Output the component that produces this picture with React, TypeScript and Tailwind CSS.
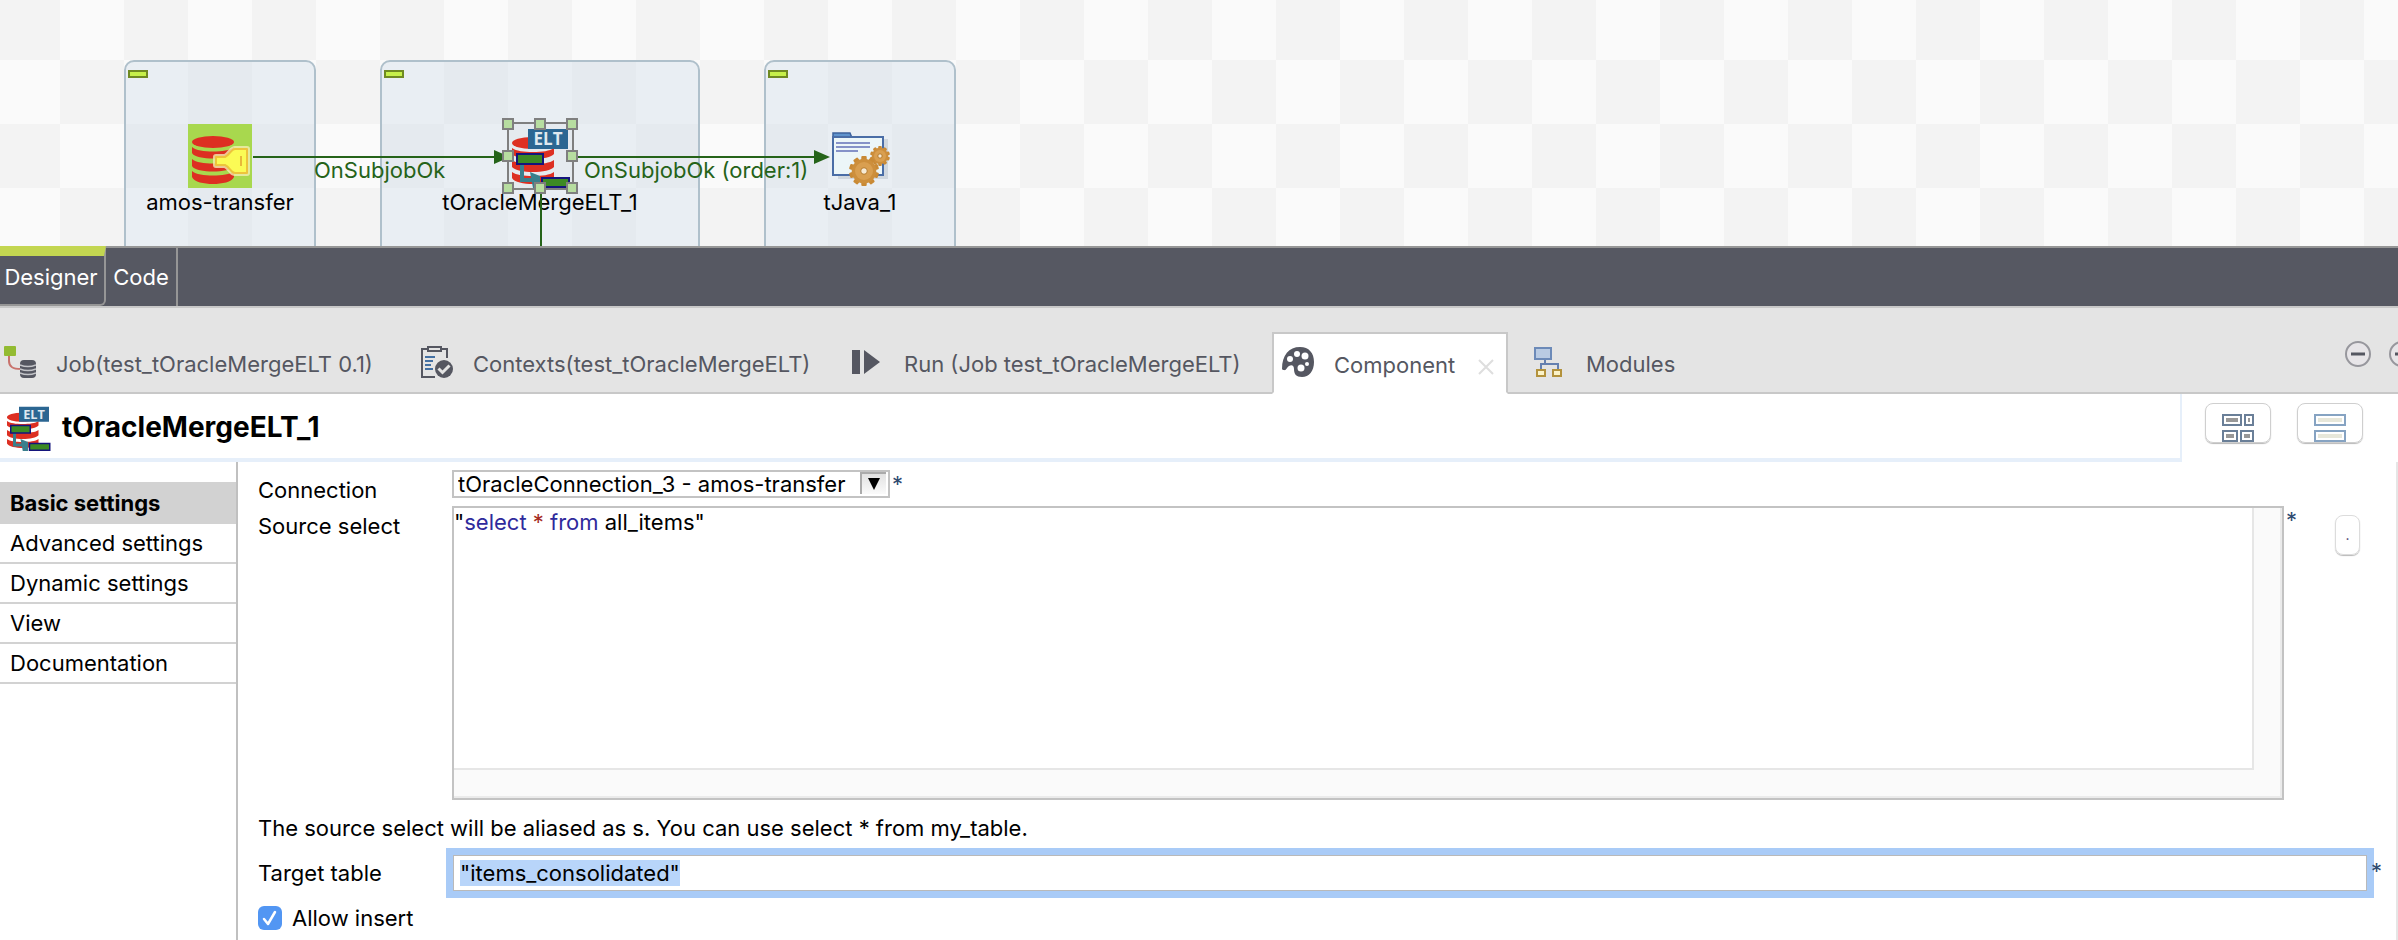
import { useEffect, useRef, useState } from "react";
import type { ReactNode } from "react";

function Gear({ cx, cy, r }: { cx: number; cy: number; r: number }) {
  const teeth = Array.from({ length: 10 }, (_, i) => i * 36);
  return (
    <g>
      {teeth.map((a) => (
        <rect
          key={a}
          x={cx - r * 0.18}
          y={cy - r}
          width={r * 0.36}
          height={r}
          rx={1}
          fill="#c98a35"
          transform={`rotate(${a} ${cx} ${cy})`}
        />
      ))}
      <circle cx={cx} cy={cy} r={r * 0.82} fill="#cd8f3c" />
      <circle cx={cx} cy={cy} r={r * 0.6} fill="#d99f50" />
      <circle cx={cx} cy={cy} r={r * 0.22} fill="#f6ead4" stroke="#b67a2a" strokeWidth="1" />
    </g>
  );
}

function ConnectionIcon() {
  return (
    <svg viewBox="0 0 64 64" className="size-16 bg-[#a8d84e]" aria-hidden="true">
      <g fill="#dd2f22">
        <ellipse cx="25" cy="18" rx="21" ry="6" />
        <path d="M4 23c4 3.500 12 4.500 21 4.500s17-1 21-4.500v6c-2 4-12 5.500-21 5.500S6 33 4 29z" />
        <path d="M4 35c4 3.500 12 4.500 21 4.500s17-1 21-4.500v7c-2 4-12 5.500-21 5.500S6 46 4 42z" />
        <path d="M4 47c4 3.500 12 4.500 21 4.500s17-1 21-4.500v6c-2 5-12 7-21 7S6 58 4 53z" />
      </g>
      <path d="M28 33h9c5-2 6-8 10-8h12v24H47c-4 0-5-6-10-8h-9z" fill="none" stroke="#f3eeb0" strokeWidth="6" strokeLinejoin="round" opacity=".8" />
      <path d="M28 33h9c5-2 6-8 10-8h12v24H47c-4 0-5-6-10-8h-9z" fill="#fbfb55" stroke="#edc43c" strokeWidth="2" strokeLinejoin="round" />
      <path d="M53 32v10" stroke="#e8b93a" strokeWidth="2" />
    </svg>
  );
}

function MergeIcon({ className }: { className: string }) {
  return (
    <svg viewBox="0 0 64 64" className={className} aria-hidden="true">
      <g fill="#dd2f22">
        <ellipse cx="24" cy="19" rx="20" ry="6" />
        <path d="M4 24c4 3 12 4 21 4s17-1 21-4v6c-2 3-12 5-21 5S6 33 4 30z" />
        <path d="M4 36c4 3 12 4 21 4s17-1 21-4v7c-2 3-12 5-21 5S6 46 4 43z" />
        <path d="M4 48c4 3 12 4 21 4s17-1 21-4v6c-2 4-12 6-21 6S6 58 4 54z" />
      </g>
      <rect x="20" y="5" width="40" height="20" fill="#2b6692" />
      <text x="40" y="21" textAnchor="middle" fontFamily="Open Sans, sans-serif" fontWeight="700" fontSize="17" fill="#dfe8ef">
        ELT
      </text>
      <path d="M14 40v16h10" fill="none" stroke="#3a7f8c" strokeWidth="4" />
      <path d="M22 48l10 4v12h-7z" fill="#3a7f8c" />
      <rect x="9" y="30" width="26" height="10" fill="#3c8a24" stroke="#14147c" strokeWidth="2" />
      <rect x="34" y="54" width="27" height="9" fill="#3c8a24" stroke="#14147c" strokeWidth="2" />
    </svg>
  );
}

function JavaIcon() {
  return (
    <svg viewBox="0 0 64 64" className="size-16" aria-hidden="true">
      <path d="M10 15h50v40H10z" fill="#aab3bd" opacity=".4" />
      <path d="M5 14V9h17l2 5z" fill="#5f93cc" stroke="#3c619c" strokeWidth="1.500" />
      <rect x="5" y="13" width="50" height="38" fill="#ecf6f8" stroke="#4a6da6" strokeWidth="2" />
      <path d="M8 19h34M8 23h34M8 27h22" stroke="#8592c8" strokeWidth="2" />
      <Gear cx={52} cy={32} r={10} />
      <Gear cx={36} cy={47} r={15} />
    </svg>
  );
}

function JobIcon() {
  return (
    <svg viewBox="0 0 32 32" className="size-8" aria-hidden="true">
      <path d="M5 9v6c0 6 4 8 12 8" fill="none" stroke="#c9736d" strokeWidth="2" />
      <rect width="12" height="10" rx="1" fill="#93bb32" />
      <rect x="16" y="14" width="16" height="18" rx="4" fill="#555761" />
      <path d="M16 19c5 2 11 2 16 0M16 23c5 2 11 2 16 0M16 27c5 2 11 2 16 0" fill="none" stroke="#c3c4c8" strokeWidth="1.500" />
    </svg>
  );
}

function ContextsIcon() {
  return (
    <svg viewBox="0 0 32 32" className="size-8" aria-hidden="true">
      <path d="M14 31H1V3h6M20 3h6v9" fill="none" stroke="#555761" strokeWidth="2" />
      <rect x="7" y="1" width="13" height="4" fill="none" stroke="#555761" strokeWidth="2" />
      <path d="M4 11h10M4 15h8M4 19h6M4 23h8" stroke="#4370a3" strokeWidth="2" />
      <circle cx="23" cy="23" r="9" fill="#555761" />
      <path d="M17.500 22.500l4 4 7-7" fill="none" stroke="#e4e4e4" strokeWidth="3" />
    </svg>
  );
}

function RunIcon() {
  return (
    <svg viewBox="0 0 32 32" className="size-8" aria-hidden="true">
      <path d="M0 4h8v24H0zM12 4l16 12-16 12z" fill="#555761" />
    </svg>
  );
}

function PaletteIcon() {
  return (
    <svg viewBox="0 0 32 32" className="size-8" aria-hidden="true">
      <path d="M0 22C0 8 7 0 18 0c9 0 14 6 14 15 0 9-5 15-12 15-6 0-8-3-8-8 0-3-2-5-5-3-2 1-3 5-5 4C1 23 0 22.500 0 22z" fill="#555761" />
      <g fill="#fff">
        <circle cx="8" cy="12" r="3" />
        <circle cx="15" cy="7" r="3" />
        <circle cx="23" cy="9" r="3.500" />
        <circle cx="25" cy="17" r="2" />
        <circle cx="19" cy="21" r="3.500" />
      </g>
    </svg>
  );
}

function ModulesIcon() {
  return (
    <svg viewBox="0 0 32 32" className="size-8" aria-hidden="true">
      <path d="M11 13v6M7 23v-5h17v5" fill="none" stroke="#6580b0" strokeWidth="2" />
      <rect x="1" y="2" width="16" height="11" fill="#b9cbe3" stroke="#6c8ab8" strokeWidth="2" />
      <rect x="3" y="24" width="8" height="6" fill="#fbf3c8" stroke="#b3923c" strokeWidth="2" />
      <rect x="19" y="24" width="8" height="6" fill="#fbf3c8" stroke="#b3923c" strokeWidth="2" />
    </svg>
  );
}

function MinimizeIcon() {
  return (
    <svg viewBox="0 0 28 28" className="size-7" aria-hidden="true">
      <circle cx="14" cy="14" r="12" fill="#e7e5e8" stroke="#97979d" strokeWidth="2" />
      <path d="M7 14h14" stroke="#555761" strokeWidth="3" />
    </svg>
  );
}

function GridLayoutIcon() {
  return (
    <svg viewBox="0 0 32 28" className="h-7 w-8" aria-hidden="true">
      <g fill="#fff" stroke="#6a7f98" strokeWidth="2">
        <rect x="1" y="1" width="18" height="10" />
        <rect x="23" y="1" width="8" height="10" />
        <rect x="1" y="17" width="14" height="10" />
        <rect x="19" y="17" width="12" height="10" />
      </g>
      <path d="M4 4h12v4H4zM26 4h2v4h-2zM4 20h8v4H4zM22 20h6v4h-6z" fill="#989898" />
    </svg>
  );
}

function RowLayoutIcon() {
  return (
    <svg viewBox="0 0 32 28" className="h-7 w-8" aria-hidden="true">
      <g fill="#fff" stroke="#86a3c2" strokeWidth="2">
        <rect x="1" y="1" width="30" height="10" />
        <rect x="1" y="17" width="30" height="10" />
      </g>
      <path d="M4 4h24v4H4zM4 20h24v4H4z" fill="#e7e7da" />
    </svg>
  );
}

function Subjob({ className, children }: { className: string; children: ReactNode }) {
  return (
    <div className={`absolute top-[60px] h-[200px] rounded-[10px] border-2 border-[#afc0cb] bg-[rgba(216,226,236,0.5)] ${className}`}>
      <span className="absolute top-2 left-0.5 h-2 w-5 border-2 border-[#6f8a22] bg-[#c6f04a]" />
      <div className="flex flex-col items-center pt-[62px]">{children}</div>
    </div>
  );
}

function NodeLabel({ children }: { children: ReactNode }) {
  return <span className="leading-7 whitespace-nowrap">{children}</span>;
}

const handles = [
  "left-[502px] top-[118px]",
  "left-[534px] top-[118px]",
  "left-[566px] top-[118px]",
  "left-[502px] top-[150px]",
  "left-[566px] top-[150px]",
  "left-[502px] top-[182px]",
  "left-[534px] top-[182px]",
  "left-[566px] top-[182px]",
];

function Canvas() {
  return (
    <section
      aria-label="Job design"
      className="relative h-[246px] overflow-hidden bg-[repeating-conic-gradient(#fafafa_0_25%,#f3f3f3_0_50%)] bg-[length:128px_128px] bg-[position:-4px_-4px]"
    >
      <Subjob className="left-[124px] w-[192px]">
        <ConnectionIcon />
        <NodeLabel>amos-transfer</NodeLabel>
      </Subjob>
      <Subjob className="left-[380px] w-[320px]">
        <MergeIcon className="size-16" />
        <NodeLabel>tOracleMergeELT_1</NodeLabel>
      </Subjob>
      <Subjob className="left-[764px] w-[192px]">
        <JavaIcon />
        <NodeLabel>tJava_1</NodeLabel>
      </Subjob>
      <svg className="absolute top-0 left-0 h-[246px] w-[960px]" viewBox="0 0 960 246" aria-hidden="true">
        <g stroke="#256319" strokeWidth="2">
          <path d="M253 157h243M578 157h240M541 192v54" />
        </g>
        <path d="M494 150l16 7-16 7zM814 150l16 7-16 7z" fill="#256319" />
        <rect x="508" y="123" width="65" height="66" fill="none" stroke="#7f7f7f" strokeWidth="2" />
      </svg>
      {handles.map((place) => (
        <span key={place} className={`absolute size-3 border-2 border-[#7f7f7f] bg-[#b7dda0] ${place}`} />
      ))}
      <span className="absolute top-[156px] left-[314px] leading-7 text-[#256319]">OnSubjobOk</span>
      <span className="absolute top-[156px] left-[584px] leading-7 whitespace-nowrap text-[#256319]">OnSubjobOk (order:1)</span>
    </section>
  );
}

function EditorTabs() {
  return (
    <nav aria-label="Editor pages" className="flex h-[62px] border-b-2 border-[#c8c8c8] bg-[#565862] text-white">
      <button className="w-[106px] rounded-br-md border-t-10 border-r-2 border-b-2 border-t-[#c3d651] border-r-[#969696] border-b-[#969696] pr-0.5 pb-1.5 text-center">
        Designer
      </button>
      <button className="w-[72px] border-t-2 border-r-2 border-[#969696] text-center">Code</button>
      <div className="flex-1 border-t-2 border-[#969696]" />
    </nav>
  );
}

function ViewTab({ icon, className, children }: { icon: ReactNode; className: string; children: ReactNode }) {
  return (
    <button className={`flex h-full shrink-0 items-center gap-5 border-b-2 border-[#c8c8c8] whitespace-nowrap ${className}`}>
      {icon}
      <span className="pt-1">{children}</span>
    </button>
  );
}

function ViewTabs() {
  return (
    <nav aria-label="Views" className="flex h-[86px] items-end overflow-hidden bg-[#e4e4e4] pt-6 text-[#555761]">
      <ViewTab icon={<JobIcon />} className="w-[421px] pl-1">
        Job(test_tOracleMergeELT 0.1)
      </ViewTab>
      <ViewTab icon={<ContextsIcon />} className="w-[431px]">
        Contexts(test_tOracleMergeELT)
      </ViewTab>
      <ViewTab icon={<RunIcon />} className="w-[420px]">
        Run (Job test_tOracleMergeELT)
      </ViewTab>
      <div className="flex h-full w-[236px] shrink-0 items-center border-2 border-[#c8c8c8] border-b-white bg-white px-2">
        <button className="flex flex-1 items-center gap-5">
          <PaletteIcon />
          <span className="pt-1">Component</span>
        </button>
        <button aria-label="Close Component" className="px-1 pt-2">
          <svg viewBox="0 0 16 16" className="size-4" aria-hidden="true">
            <path d="M1 1l14 14M15 1L1 15" stroke="#dedede" strokeWidth="2" />
          </svg>
        </button>
      </div>
      <ViewTab icon={<ModulesIcon />} className="w-[200px] pl-[26px]">
        Modules
      </ViewTab>
      <div className="flex h-full min-w-0 flex-1 items-start justify-end gap-4 overflow-hidden border-b-2 border-[#c8c8c8] pt-2">
        <button aria-label="Minimize" className="shrink-0">
          <MinimizeIcon />
        </button>
        <button aria-label="Maximize" className="-mr-[18px] shrink-0">
          <MinimizeIcon />
        </button>
      </div>
    </nav>
  );
}

function TitleBar() {
  return (
    <header className="flex h-[68px] bg-white">
      <div className="flex flex-1 items-center gap-2.5 border-r-2 border-b-4 border-[#e6effa] pt-0.5 pl-1">
        <MergeIcon className="size-12" />
        <h1 className="text-[28px] font-bold">tOracleMergeELT_1</h1>
      </div>
      <div className="flex gap-[26px] pt-[9px] pr-[35px] pl-[23px]">
        <button aria-label="Table layout" className="flex h-10 w-[66px] items-end justify-center rounded-lg border border-[#cfcfcf] shadow-[0_1px_1px_#b8b8b8]">
          <GridLayoutIcon />
        </button>
        <button aria-label="Row layout" className="flex h-10 w-[66px] items-end justify-center rounded-lg border border-[#cfcfcf] shadow-[0_1px_1px_#b8b8b8]">
          <RowLayoutIcon />
        </button>
      </div>
    </header>
  );
}

const sections = ["Basic settings", "Advanced settings", "Dynamic settings", "View", "Documentation"];

function SectionList() {
  return (
    <nav aria-label="Settings" className="w-[238px] shrink-0 border-r-2 border-[#c0c0c0] pt-5">
      {sections.map((name, i) => (
        <button
          key={name}
          className={
            i === 0
              ? "block h-[42px] w-full bg-[#d2d2d2] pl-2.5 text-left font-bold"
              : "block h-10 w-full border-b-2 border-[#d2d2d2] pl-2.5 text-left"
          }
        >
          {name}
        </button>
      ))}
    </nav>
  );
}

function Required() {
  return <span className="leading-7 text-[#2f4a70]">*</span>;
}

function Highlighted({ code }: { code: string }) {
  return (
    <>
      {code.split(/(\bselect\b|\bfrom\b|\*)/).map((part, i) => {
        if (part === "*") return <span key={i} className="text-[#a52a1e]">{part}</span>;
        if (part === "select" || part === "from") return <span key={i} className="text-[#2f2a9c]">{part}</span>;
        return part;
      })}
    </>
  );
}

function SettingsForm() {
  const [source, setSource] = useState('"select * from all_items"');
  const target = useRef<HTMLInputElement>(null);

  useEffect(() => {
    target.current?.focus();
    target.current?.select();
  }, []);

  return (
    <form className="flex min-w-0 flex-1 flex-col border-r-2 border-[#e6e6e6] pt-2 pl-5">
      <div className="flex h-9">
        <label htmlFor="connection" className="w-[194px] shrink-0 pt-1.5 leading-7">
          Connection
        </label>
        <div className="relative mr-0.5 h-7 w-[438px] border-2 border-[#c3c3c3]">
          <div className="h-[22px] overflow-hidden">
            <select id="connection" className="block h-6 w-full appearance-none bg-white pl-1 leading-6 outline-none">
              <option>tOracleConnection_3 - amos-transfer</option>
            </select>
          </div>
          <span className="pointer-events-none absolute top-0 right-0.5 flex h-[22px] w-[26px] items-center justify-center border-t-2 border-l-2 border-[#ababab] bg-linear-to-b from-[#e2e2e2] to-[#fafafa]">
            <svg viewBox="0 0 12 12" className="size-3" aria-hidden="true">
              <path d="M0 0h12L6 12z" fill="#000" />
            </svg>
          </span>
        </div>
        <Required />
      </div>

      <div className="flex">
        <label htmlFor="source" className="w-[194px] shrink-0 pt-1.5 leading-7">
          Source select
        </label>
        <div className="relative h-[294px] min-w-0 flex-1 border-2 border-[#c3c3c3] bg-[#fafafa] pr-7 pb-7 shadow-[inset_-2px_-2px_#ebebeb]">
          <div className="relative h-full border-r-2 border-b-2 border-[#e6e6e6] bg-white">
            <pre aria-hidden="true" className="font-[Inter,sans-serif] leading-7">
              <Highlighted code={source} />
            </pre>
            <textarea
              id="source"
              spellCheck={false}
              value={source}
              onChange={(e) => setSource(e.target.value)}
              className="absolute inset-0 resize-none bg-transparent leading-7 text-transparent caret-black outline-none"
            />
          </div>
        </div>
        <div className="flex w-[112px] shrink-0 justify-between pr-9 pl-0.5">
          <Required />
          <button
            type="button"
            aria-label="Open query builder"
            className="mt-[9px] h-10 w-[25px] rounded-lg border border-[#dcdcdc] text-sm text-[#4a3a6a] shadow-[0_1px_1px_#b8b8b8]"
          >
            .
          </button>
        </div>
      </div>

      <p className="pt-3.5 leading-7">The source select will be aliased as s. You can use select * from my_table.</p>

      <div className="flex pt-[13px]">
        <label htmlFor="target" className="w-[195px] shrink-0 pt-1 leading-7">
          Target table
        </label>
        <input
          id="target"
          ref={target}
          defaultValue={'"items_consolidated"'}
          className="h-9 min-w-0 flex-1 border border-[#b9b9b9] bg-white px-1.5 leading-7 shadow-[0_0_0_7px_#a9cbf7] outline-none selection:bg-[#b8d5fa] selection:text-black"
        />
        <span className="relative w-[29px] pl-1">
          <Required />
        </span>
      </div>

      <label className="mt-[15px] flex h-6 items-center gap-2.5">
        <span className="relative size-6">
          <input type="checkbox" defaultChecked className="peer block size-6 appearance-none rounded-md bg-[#5296f3] not-checked:bg-[#d8d8d8]" />
          <svg viewBox="0 0 24 24" className="pointer-events-none absolute inset-0 hidden peer-checked:block" aria-hidden="true">
            <path d="M6 13l4 5 7-12" fill="none" stroke="#fff" strokeWidth="2.500" strokeLinecap="round" strokeLinejoin="round" />
          </svg>
        </span>
        Allow insert
      </label>
    </form>
  );
}

export default function App() {
  return (
    <div className="flex min-h-screen flex-col bg-white font-[Inter,sans-serif] text-[22px] text-black">
      <Canvas />
      <EditorTabs />
      <ViewTabs />
      <TitleBar />
      <main className="flex flex-1">
        <SectionList />
        <SettingsForm />
      </main>
    </div>
  );
}
